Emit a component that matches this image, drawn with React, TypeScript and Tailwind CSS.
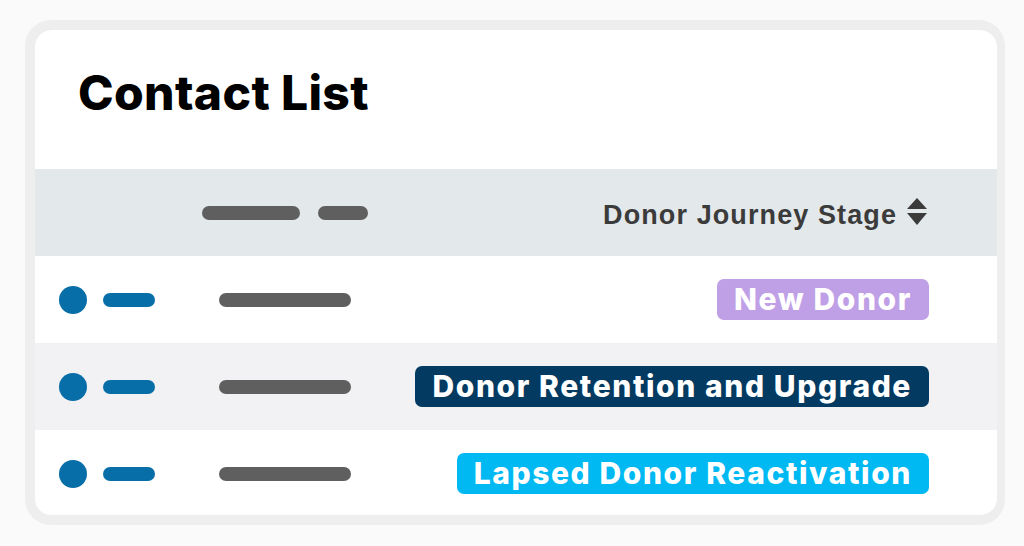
import React from "react";

const rows = [
  { label: "New Donor", cls: "bg-[#bf9fe6]", bg: "bg-white" },
  { label: "Donor Retention and Upgrade", cls: "bg-[#023a61]", bg: "bg-[#f2f2f4]" },
  { label: "Lapsed Donor Reactivation", cls: "bg-[#00b8f2]", bg: "bg-white" },
];

export default function App() {
  return (
    <div className="w-[1024px] h-[546px] bg-[#fafafa] pt-[20px] pl-[25px]">
      <div className="w-[980px] h-[505px] rounded-[26px] border-[10px] border-r-[8px] border-[#eeeeee] overflow-hidden">
        <div className="h-full w-full bg-white rounded-[16px] overflow-hidden flex flex-col shadow-[0_0_0_1px_#e4e4e4]">
          <div className="h-[139px] shrink-0 pl-[43px] pt-[33px]">
            <h1 className="text-[48px] leading-[60px] font-extrabold text-black tracking-[0.35px] [font-family:Inter,sans-serif]">
              Contact List
            </h1>
          </div>
          <div className="h-[87px] shrink-0 bg-[#e3e8ea] flex items-center">
            <div className="ml-[167px] w-[98px] h-[14px] rounded-full bg-[#5f5f5f]" />
            <div className="ml-[18px] w-[50px] h-[14px] rounded-full bg-[#5f5f5f]" />
            <div className="ml-auto mr-[70px] flex items-center gap-[10px]">
              <span className="mt-[6px] text-[27px] font-bold text-[#3b3b3b] tracking-[1.1px] [font-family:'Liberation_Sans',Arial,sans-serif]">
                Donor Journey Stage
              </span>
              <svg width="20" height="28" viewBox="0 0 20 28" className="mt-[-1px]">
                <polygon points="10,0 20,11 0,11" fill="#3b3b3b" />
                <polygon points="0,15 20,15 10,27" fill="#3b3b3b" />
              </svg>
            </div>
          </div>
          {rows.map((r) => (
            <div key={r.label} className={`h-[87px] shrink-0 flex items-center ${r.bg}`}>
              <div className="ml-[24px] w-[28px] h-[28px] rounded-full bg-[#086ea8]" />
              <div className="ml-[16px] w-[52px] h-[14px] rounded-full bg-[#086ea8]" />
              <div className="ml-[64px] w-[132px] h-[14px] rounded-full bg-[#5f5f5f]" />
              <div
                className={`ml-auto mr-[68px] h-[41px] px-[17px] rounded-[7px] flex items-center text-white text-[30px] font-extrabold tracking-[1.6px] [font-family:Inter,sans-serif] ${r.cls}`}
              >
                {r.label}
              </div>
            </div>
          ))}
        </div>
      </div>
    </div>
  );
}
